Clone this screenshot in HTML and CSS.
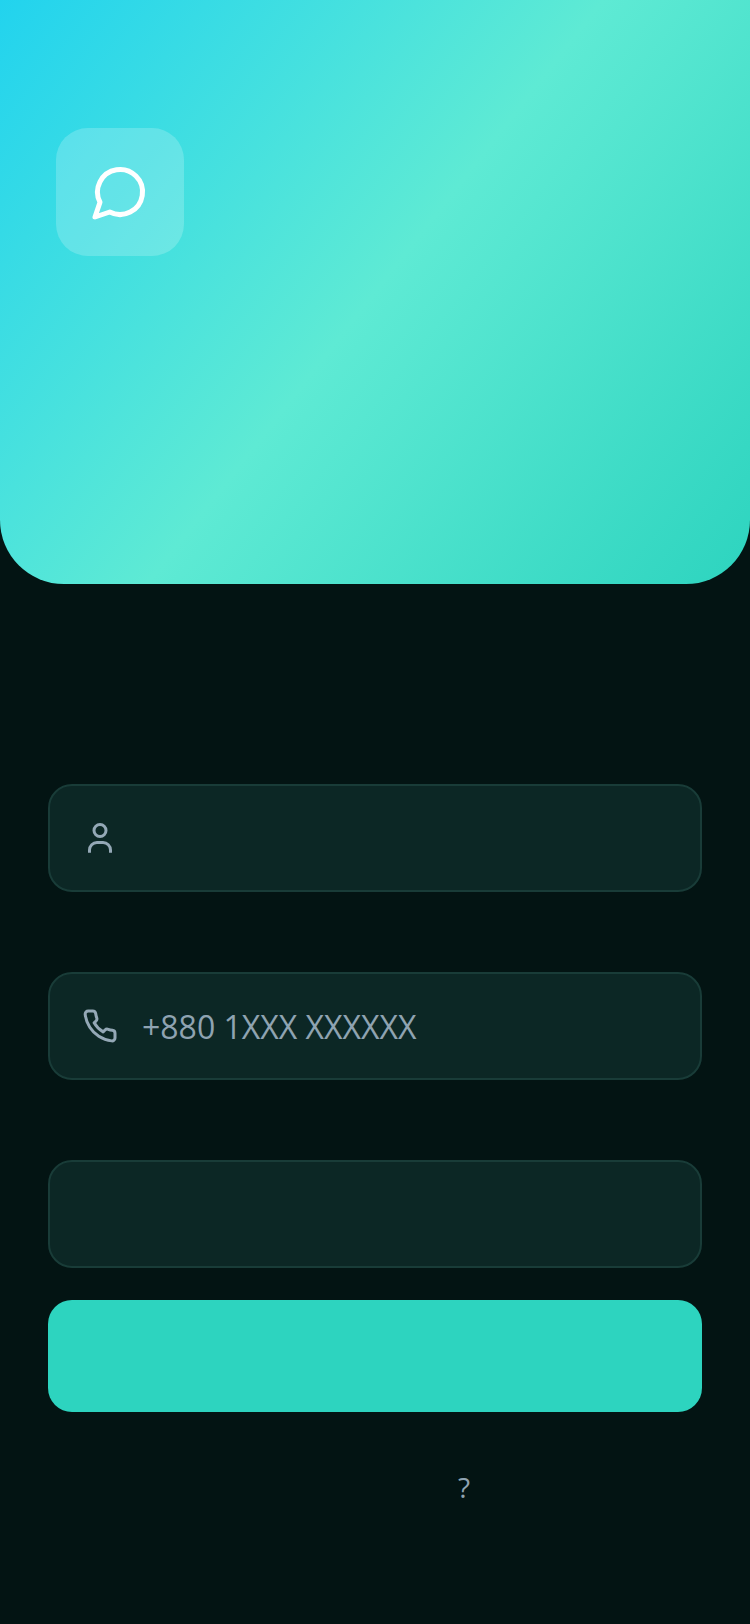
FILE: index.html
```html
<!DOCTYPE html>
<html lang="en">
<head>
<meta charset="UTF-8" />
<meta name="viewport" content="width=device-width, initial-scale=1" />
<title>Sign Up</title>
<link rel="stylesheet" href="styles.css">
</head>
<body>
    <header class="hero">
        <div class="logo">
            <svg class="logo-icon" viewBox="0 0 24 24" aria-hidden="true">
                <path d="M7.9 20A9 9 0 1 0 4 16.1L2 22Z" />
            </svg>
        </div>
    </header>

    <form class="form">
        <label class="field">
            <svg class="field-icon" viewBox="0 0 24 24" aria-hidden="true">
                <circle cx="12" cy="7" r="4" />
                <path d="M5 21.8V20a5 5 0 0 1 5-5h4a5 5 0 0 1 5 5v1.8" />
            </svg>
            <input class="field-input" type="text" aria-label="Name" />
        </label>

        <label class="field">
            <svg class="field-icon" viewBox="0 0 24 24" aria-hidden="true">
                <path d="M22 16.92v3a2 2 0 0 1-2.18 2 19.79 19.79 0 0 1-8.63-3.07 19.5 19.5 0 0 1-6-6 19.79 19.79 0 0 1-3.07-8.67A2 2 0 0 1 4.11 2h3a2 2 0 0 1 2 1.72 12.84 12.84 0 0 0 .7 2.81 2 2 0 0 1-.45 2.11L8.09 9.91a16 16 0 0 0 6 6l1.27-1.27a2 2 0 0 1 2.11-.45 12.84 12.84 0 0 0 2.81.7A2 2 0 0 1 22 16.92z" />
            </svg>
            <input class="field-input" type="tel" placeholder="+880 1XXX XXXXXX" aria-label="Phone" />
        </label>

        <label class="field">
            <input class="field-input" type="text" aria-label="Code" />
        </label>

        <button class="submit" type="button" aria-label="Continue"></button>
    </form>

    <p class="footer">?</p>
</body>
</html>
```

FILE: styles.css
```css
/* General Reset */
* {
    margin: 0;
    padding: 0;
    box-sizing: border-box;
}

body {
    font-family: "Open Sans", sans-serif;
    background-color: #031413;
    min-height: 100vh;
}

/* Top gradient panel */
.hero {
    height: 584px;
    padding: 128px 56px 0;
    background: linear-gradient(128deg, #22d3ee 0%, #5eead4 50%, #2dd4bf 100%);
    border-radius: 0 0 64px 64px;
}

.logo {
    width: 128px;
    height: 128px;
    border-radius: 32px;
    background-color: rgba(255, 255, 255, 0.2);
    display: flex;
    justify-content: center;
    align-items: center;
}

.logo-icon {
    width: 60px;
    height: 60px;
    fill: none;
    stroke: #fff;
    stroke-width: 2;
    stroke-linecap: round;
    stroke-linejoin: round;
}

/* Form */
.form {
    display: flex;
    flex-direction: column;
    padding: 200px 48px 0;
}

.field {
    height: 108px;
    margin-bottom: 80px;
    padding: 0 32px;
    display: flex;
    align-items: center;
    gap: 24px;
    background-color: #0c2725;
    border: 2px solid #193c38;
    border-radius: 24px;
}

.field:nth-of-type(3) {
    margin-bottom: 32px;
}

.field-icon {
    width: 36px;
    height: 36px;
    flex-shrink: 0;
    fill: none;
    stroke: #94a8b6;
    stroke-width: 2;
    stroke-linejoin: round;
}

.field-input {
    flex: 1;
    min-width: 0;
    font-family: inherit;
    font-size: 32px;
    color: #e2e8f0;
    background: none;
    border: none;
    outline: none;
}

.field-input::placeholder {
    color: #8fa3b1;
    opacity: 1;
}

.submit {
    height: 112px;
    background-color: #2dd4bf;
    border: none;
    border-radius: 24px;
    cursor: pointer;
}

/* Footer line */
.footer {
    margin-top: 56px;
    padding-left: 458px;
    font-size: 28px;
    line-height: 38px;
    color: #8fa3b1;
}
```
